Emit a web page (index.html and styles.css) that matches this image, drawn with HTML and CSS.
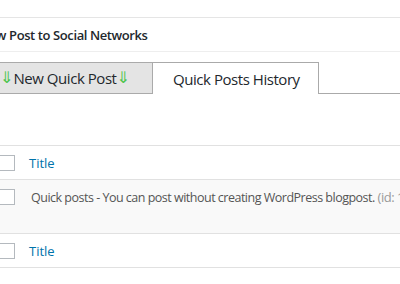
FILE: index.html
```html
<!DOCTYPE html>
<html lang="en">
<head>
    <meta charset="UTF-8">
    <title>New Post to Social Networks</title>
    <link rel="stylesheet" href="styles.css">
</head>
<body>
    <div class="wrap">
        <div class="postbox">
            <h2 class="hndle">New Post to Social Networks</h2>
            <div class="inside">
                <div class="tabs">
                    <a class="tab"><span class="arrow">&#8659;</span>New Quick Post<span class="arrow">&#8659;</span></a>
                    <a class="tab active">Quick Posts History</a>
                    <span class="tab-rest"></span>
                </div>

                <table class="list">
                    <thead>
                        <tr>
                            <td class="check"><span class="box"></span></td>
                            <th><a href="#">Title</a></th>
                        </tr>
                    </thead>
                    <tbody>
                        <tr class="alt">
                            <td class="check"><span class="box"></span></td>
                            <td class="post">Quick posts - You can post without creating WordPress blogpost. <span class="id">(id: 1)</span></td>
                        </tr>
                    </tbody>
                    <tfoot>
                        <tr>
                            <td class="check"><span class="box"></span></td>
                            <th><a href="#">Title</a></th>
                        </tr>
                    </tfoot>
                </table>
            </div>
        </div>
    </div>
</body>
</html>
```

FILE: styles.css
```css
body { margin: 0; background: #fff; font-family: "Open Sans", sans-serif; color: #444; overflow: hidden; }
.wrap { margin-left: -21px; width: 700px; padding-top: 17px; }
.postbox { border-top: 1px solid #e5e5e5; }
.hndle { margin: 0; font-size: 13px; font-weight: 600; letter-spacing: -0.4px; color: #23282d; height: 33px; line-height: 34px; border-bottom: 1px solid #eee; white-space: nowrap; }
.inside { padding-top: 10px; }
.tabs { display: flex; height: 32px; }
.tab { display: flex; align-items: center; box-sizing: border-box; height: 32px; padding: 0 20px; font-size: 15px; letter-spacing: -0.45px; color: #23282d; border: 1px solid #aaa; white-space: nowrap; }
.tab:first-child { background: #e4e4e4; width: 174px; padding-left: 20px; }
.tab.active { background: #fff; border-left: none; border-bottom: none; width: 166px; }
.arrow { font-family: "DejaVu Sans", sans-serif; font-size: 16px; line-height: 1; color: #4cc44c; letter-spacing: 0; }
.tab-rest { flex: 1; border-bottom: 1px solid #aaa; }
.list { margin-top: 51px; border-collapse: collapse; width: 100%; font-size: 13px; }
.list td, .list th { text-align: left; font-weight: normal; padding: 0; vertical-align: middle; }
.list thead tr, .list tfoot tr { height: 34px; border-top: 1px solid #e1e1e1; border-bottom: 1px solid #e1e1e1; }
.list tbody tr { height: 54px; }
.list tbody td { vertical-align: top; padding-top: 9px; }
.list tbody .post { padding-top: 8px; }
.alt { background: #f9f9f9; }
.check { width: 50px; }
.box { display: block; box-sizing: border-box; width: 16px; height: 16px; margin-left: 20px; border: 1px solid #b4b9be; background: #fff; }
.list a { color: #0073aa; text-decoration: none; }
.post { color: #555; white-space: nowrap; padding-left: 2px !important; font-size: 12.5px; letter-spacing: -0.5px; }
.id { color: #999; font-size: 13px; }
```
